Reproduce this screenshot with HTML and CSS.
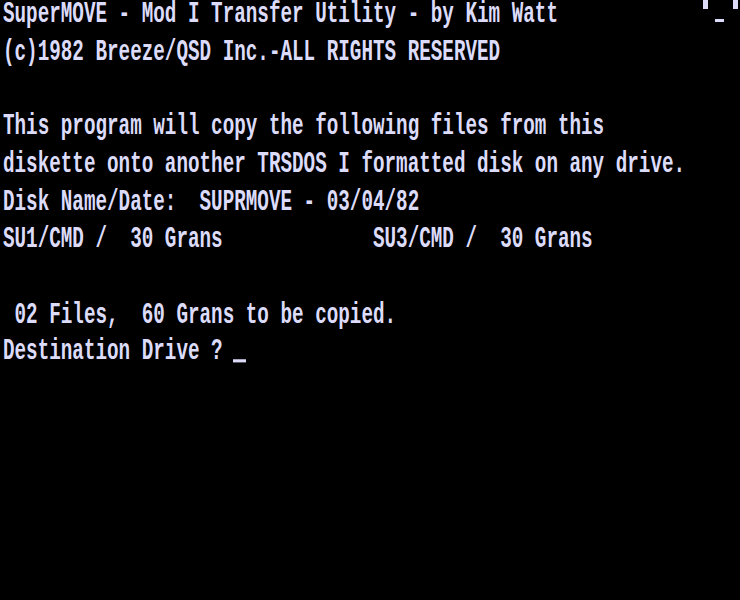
FILE: index.html
```html
<!DOCTYPE html>
<html>
<head>
<meta charset="utf-8">
<link rel="stylesheet" href="styles.css">
</head>
<body>
<div class="screen">
<pre class="text">SuperMOVE - Mod I Transfer Utility - by Kim Watt
(c)1982 Breeze/QSD Inc.-ALL RIGHTS RESERVED

This program will copy the following files from this
diskette onto another TRSDOS I formatted disk on any drive.
Disk Name/Date:  SUPRMOVE - 03/04/82
SU1/CMD /  30 Grans             SU3/CMD /  30 Grans

 02 Files,  60 Grans to be copied.
Destination Drive ? <span class="cursor"></span>
</pre>
<div class="gfx g1"></div>
<div class="gfx g2"></div>
<div class="gfx g3"></div>
</div>
</body>
</html>
```
FILE: styles.css
```css
html, body {
  margin: 0;
  padding: 0;
  background: #000;
  width: 740px;
  height: 600px;
  overflow: hidden;
}
.screen {
  position: relative;
  width: 740px;
  height: 600px;
  background: #000;
}
.text {
  margin: -3.5px 0 0 0;
  padding-left: 3px;
  height: 380px;
  font-family: "Liberation Mono", monospace;
  font-size: 19.27px;
  font-weight: bold;
  line-height: 23.81px;
  color: #dcdcfa;
  transform: scaleY(1.575);
  transform-origin: 0 0;
  white-space: pre;
}
.cursor {
  display: inline-block;
  width: 13px;
  height: 2.5px;
  background: #dcdcfa;
  vertical-align: -1.9px;
  margin-left: -1px;
}
.gfx {
  position: absolute;
  background: #dcdcfa;
}
.g1 { left: 703px; top: 0; width: 5px; height: 12px; }
.g2 { left: 733px; top: 0; width: 5px; height: 12px; }
.g3 { left: 715px; top: 22px; width: 9px; height: 3px; }
```
